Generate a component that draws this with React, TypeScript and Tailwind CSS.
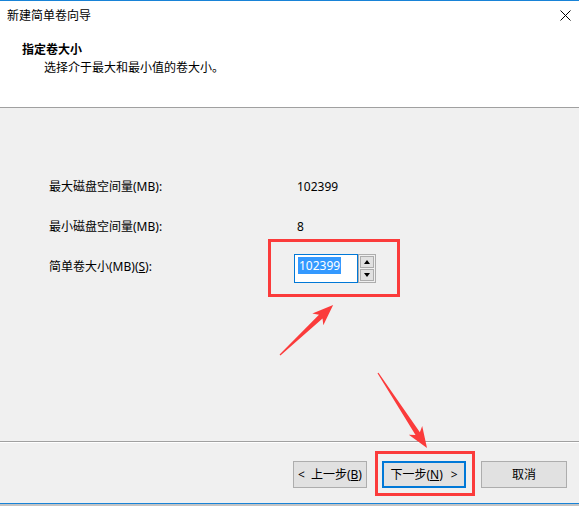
import React from "react";

const FONT = { fontFamily: "'Noto Sans','Noto Sans CJK SC',sans-serif" };

function Arrow({ x, y, len, angle }: { x: number; y: number; len: number; angle: number }) {
  const L = len;
  const pts = `0,-0.6 ${L - 17},-2.6 ${L - 21},-8 ${L},0 ${L - 21},8 ${L - 17},2.6 0,0.6`;
  return (
    <g transform={`translate(${x} ${y}) rotate(${angle})`}>
      <polygon points={pts} fill="#fb3b3b" />
    </g>
  );
}

function Btn({ w, children, primary }: { w: string; children: React.ReactNode; primary?: boolean }) {
  return (
    <div
      className={`${w} h-[27px] flex items-center justify-center bg-[#e1e1e1] text-[12px] text-black ${
        primary ? "border-2 border-[#0078d7]" : "border border-[#adadad]"
      }`}
    >
      {children}
    </div>
  );
}

export default function App() {
  return (
    <div className="relative w-[579px] h-[506px] bg-[#f0f0f0] overflow-hidden flex flex-col text-black" style={FONT}>
      <div className="h-px bg-[#1883d7]" />
      {/* header */}
      <div className="h-[107px] bg-white border-b border-[#a0a0a0] flex flex-col">
        <div className="h-[29px] flex items-center justify-between pl-[7px] pr-[8px]">
          <span className="text-[12px] leading-none">新建简单卷向导</span>
          <svg width="11" height="11" viewBox="0 0 11 11">
            <path d="M0.5 0.5 L10.5 10.5 M10.5 0.5 L0.5 10.5" stroke="#000" strokeWidth="1" />
          </svg>
        </div>
        <div className="pl-[22px] pt-[11px] text-[12px] font-bold leading-[18px]">指定卷大小</div>
        <div className="pl-[44px] text-[12px] leading-[18px]">选择介于最大和最小值的卷大小。</div>
      </div>
      {/* body */}
      <div className="flex-1 flex flex-col pt-[69px] pl-[49px]">
        <div className="h-[20px] flex items-center text-[12px]">
          <span className="w-[245px]">最大磁盘空间量(MB):</span>
          <span className="pl-[3px]">102399</span>
        </div>
        <div className="h-[20px] mt-[20px] flex items-center text-[12px]">
          <span className="w-[245px]">最小磁盘空间量(MB):</span>
          <span className="pl-[3px]">8</span>
        </div>
        <div className="h-[29px] mt-[17px] flex items-center text-[12px]">
          <span className="w-[245px] pb-[4px]">
            简单卷大小(MB)(<span className="underline">S</span>):
          </span>
          <div className="flex h-[29px]">
            <div className="w-[64px] h-[29px] border border-[#0078d7] bg-white flex items-start pt-[2px] pl-[3px]">
              <span className="bg-[#3399ff] text-white px-[1px] leading-[17px]">102399</span>
            </div>
            <div className="w-[18px] h-[29px] border border-[#adadad] bg-[#f0f0f0] flex flex-col p-px gap-px">
              <div className="flex-1 bg-[#e1e1e1] border border-[#adadad] flex items-center justify-center">
                <svg width="6" height="4" viewBox="0 0 6 4"><polygon points="3,0 6,4 0,4" fill="#000" /></svg>
              </div>
              <div className="flex-1 bg-[#e1e1e1] border border-[#adadad] flex items-center justify-center">
                <svg width="6" height="4" viewBox="0 0 6 4"><polygon points="0,0 6,0 3,4" fill="#000" /></svg>
              </div>
            </div>
          </div>
        </div>
      </div>
      {/* footer */}
      <div className="h-[62px] border-t border-[#a0a0a0] flex flex-col">
        <div className="h-px bg-white" />
        <div className="flex justify-end pt-[18px] pr-[12px] gap-[15px]">
          <Btn w="w-[74px]">
            <span className="flex items-center">
              <span className="mr-[6px]">&lt;</span>上一步(<span className="underline">B</span>)
            </span>
          </Btn>
          <Btn w="w-[84px]" primary>
            <span className="flex items-center">
              下一步(<span className="underline">N</span>)<span className="ml-[8px]">&gt;</span>
            </span>
          </Btn>
          <Btn w="w-[86px]">取消</Btn>
        </div>
      </div>
      <div className="h-px bg-[#1883d7]" />
      <div className="h-[2px] bg-[#c4c4c4]" />

      {/* annotations */}
      <div className="absolute left-[268px] top-[239px] w-[132px] h-[58px] border-[3px] border-[#fb3b3b]" />
      <div className="absolute left-[375px] top-[451px] w-[100px] h-[45px] border-[3px] border-[#fb3b3b]" />
      <svg className="absolute left-0 top-0 pointer-events-none" width="579" height="506">
        <Arrow x={280} y={355} len={73} angle={-43.3} />
        <Arrow x={378} y={373} len={89.5} angle={56.8} />
      </svg>
    </div>
  );
}
